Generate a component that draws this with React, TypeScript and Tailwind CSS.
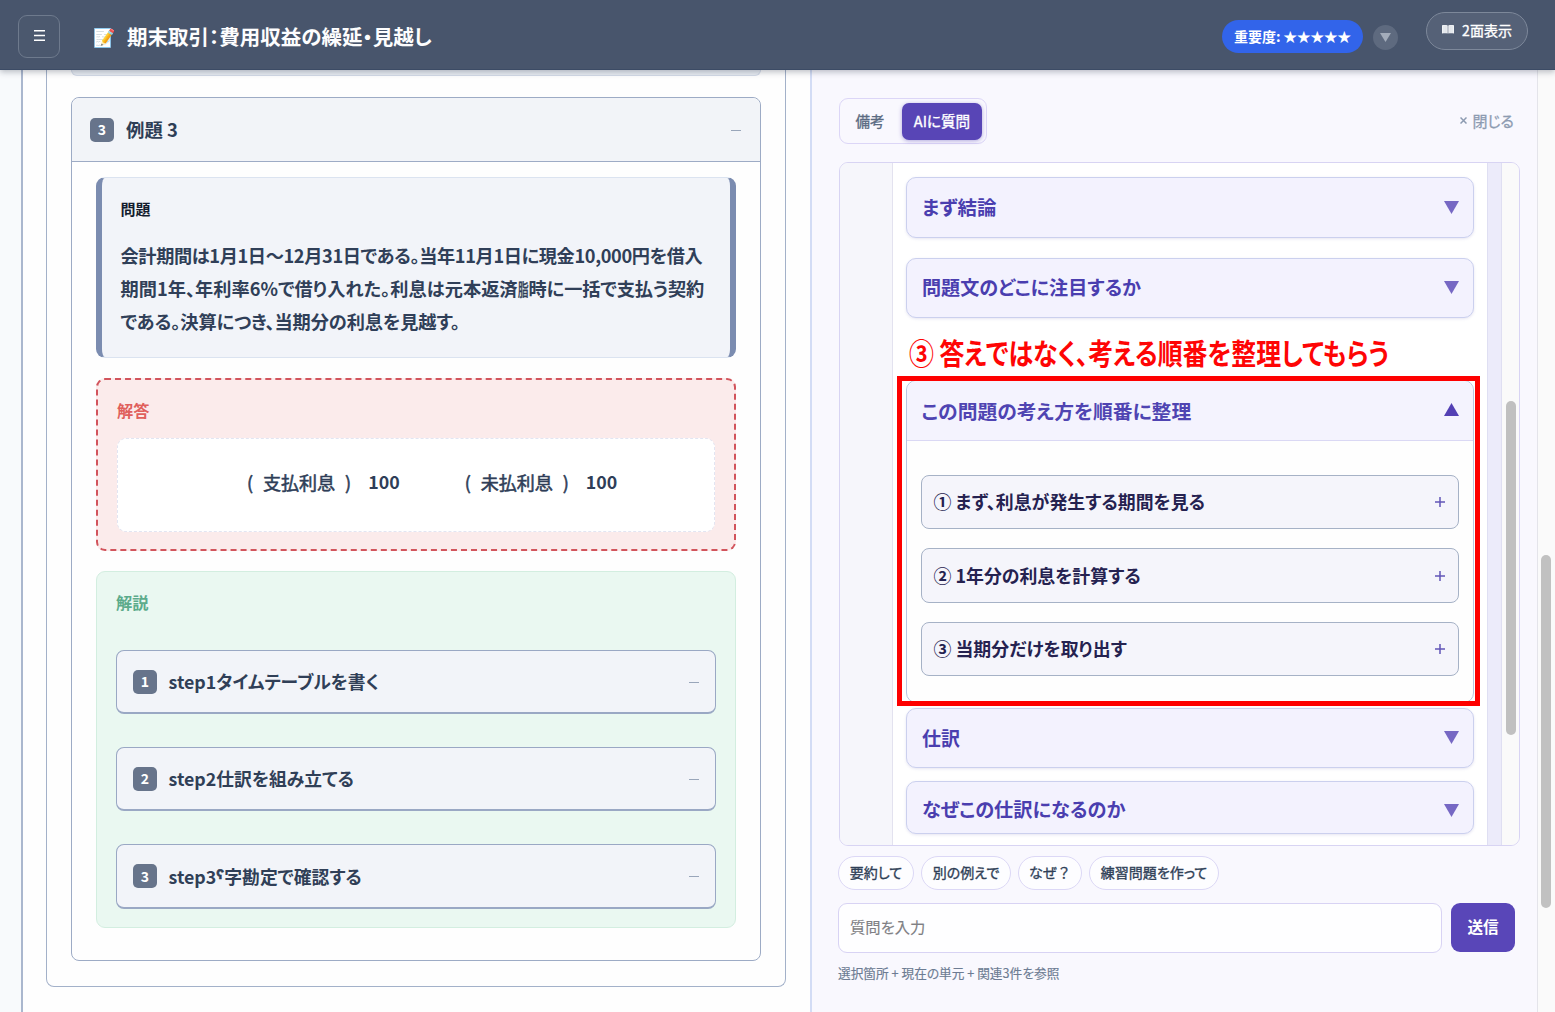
import React from "react";

function Triangle({ up = false }: { up?: boolean }) {
  return (
    <svg width="15" height="13" viewBox="0 0 15 13" className={up ? "mb-[3px] fill-[#5340b4]" : "fill-[#7668c4]"}>
      <path d={up ? "M7.5 0 15 13H0z" : "M0 0h15L7.5 13z"} />
    </svg>
  );
}

function BookIcon() {
  return (
    <svg width="12" height="9" viewBox="0 0 12 9" fill="none" className="mb-px">
      <path d="M0 .3C2 0 4.300 0 5.700.5V8.600C4.300 8.200 2 8.200 0 8.500z" fill="#f1f3f6" />
      <path d="M6.300.5C7.700 0 10 0 12 .3V8.500C10 8.200 7.700 8.200 6.300 8.600z" fill="#f1f3f6" />
      <path d="M2 .6v7.300M3.900.6v7.300M8.100.6v7.300M10 .6v7.300" stroke="#c3c9d2" strokeWidth=".5" />
    </svg>
  );
}

function Num({ n }: { n: string }) {
  return (
    <span className="flex size-6 items-center justify-center rounded-[5px] bg-[#67748b] pb-px text-[14px] leading-none font-bold text-white">
      {n}
    </span>
  );
}

function Step({ n, className, children }: { n: string; className: string; children: React.ReactNode }) {
  return (
    <div
      className={`flex items-center rounded-lg border border-b-2 border-[#9aa8c4] bg-[#f2f4f9] pr-4 pl-4 ${className}`}
    >
      <Num n={n} />
      <span className="ml-[11.500px] flex-1 text-[17.8px] font-bold whitespace-nowrap text-[#303f57]">{children}</span>
      <span className="mt-px h-px w-[10px] bg-[#99a6ba]" />
    </div>
  );
}

function Section({ className, text, children }: { className: string; text: string; children: React.ReactNode }) {
  return (
    <div
      className={`flex items-center justify-between rounded-[10px] border border-[#cbd0ee] bg-[#f3f2fe] pr-[14px] pl-[15px] shadow-[0_1px_3px_rgba(80,70,160,0.14)] ${className}`}
    >
      <span className={`font-bold whitespace-nowrap text-[#4a3eaf] ${text}`}>{children}</span>
      <Triangle />
    </div>
  );
}

function Thought({ className, children }: { className: string; children: React.ReactNode }) {
  return (
    <div
      className={`flex items-center justify-between rounded-lg border border-[#a6b2c6] bg-[#f5f5fb] pr-[13px] pl-[11.500px] ${className}`}
    >
      <span className="text-[17.9px] font-bold whitespace-nowrap text-[#252250]">{children}</span>
      <svg width="10" height="10" viewBox="0 0 10 10" className="stroke-[#6255b8]" strokeWidth="1.5">
        <path d="M5 0v10M0 5h10" />
      </svg>
    </div>
  );
}

function Chip({ className, children }: { className: string; children: React.ReactNode }) {
  return (
    <span
      className={`flex h-[34px] items-center justify-center rounded-full border border-[#dcd8f6] bg-[#fdfdff] pb-[2px] text-[14px] whitespace-nowrap text-[#2f3f57] [-webkit-text-stroke:0.35px] ${className}`}
    >
      {children}
    </span>
  );
}

function JournalAccount({ className, name, amount }: { className: string; name: string; amount: string }) {
  return (
    <span className={`flex items-center ${className}`}>
      <span className="flex gap-[10px] font-normal [-webkit-text-stroke:0.55px]">
        <span>(</span>
        <span>{name}</span>
        <span>)</span>
      </span>
      <span className="ml-[17px] text-[17.800px]">{amount}</span>
    </span>
  );
}

export default function App() {
  return (
    <div className="flex h-[1012px] w-[1555px] flex-col overflow-hidden bg-white leading-none [font-family:'Noto_Sans_CJK_JP',sans-serif] [font-feature-settings:'palt']">
      <header className="z-10 flex h-[70px] shrink-0 items-start border-b border-[#3c4b65] bg-[#48556c] shadow-[0_2px_6px_rgba(30,41,59,0.3)]">
        <div className="mt-[15px] ml-[18px] flex h-[43px] w-[42px] items-center justify-center rounded-[9px] border border-[#6e7a8d] bg-[#4b586e] pb-[2px]">
          <svg width="11" height="11" viewBox="0 0 11 11" stroke="#fff" strokeWidth="1.400">
            <path d="M0 .8h11M0 5.500h11M0 10.200h11" />
          </svg>
        </div>
        <div className="ml-[33px] flex h-[72px] items-center">
          <span className="w-[34px] text-[18px]">📝</span>
          <span className="text-[20.5px] font-bold whitespace-nowrap text-[#fdfdfe]">期末取引：費用収益の繰延・見越し</span>
        </div>
        <div className="ml-auto flex pr-[27px]">
          <div className="mt-5 flex h-[33px] w-[141px] items-center justify-center gap-[3px] rounded-full bg-[#3264ea] text-[14px] font-bold whitespace-nowrap text-white">
            <span className="pb-px">重要度:</span>
            <span className="text-[13.5px]">★★★★★</span>
          </div>
          <div className="mt-[25px] ml-[10px] flex size-[25px] items-center justify-center rounded-full bg-[#5e6a7f]">
            <svg width="11" height="9" viewBox="0 0 11 9" className="fill-[#a3acba]">
              <path d="M0 0h11L5.500 9z" />
            </svg>
          </div>
          <div className="mt-3 ml-[28px] flex h-[38px] w-[102px] items-center justify-center gap-2 rounded-full border border-[#7d889a] bg-[#556177] pb-[2px] text-[14px] whitespace-nowrap text-white">
            <BookIcon />
            <span className="[-webkit-text-stroke:0.35px]">2面表示</span>
          </div>
        </div>
      </header>

      <div className="flex min-h-0 flex-1">
        <main className="flex w-[810px] shrink-0 bg-[#f8fafc]">
          <div className="ml-[21px] flex-1 border-l-2 border-[#aab7ce] bg-[#fefefe] pl-[23px]">
            <div className="h-[917px] w-[740px] rounded-b-lg border border-t-0 border-[#a3b1c9] px-6">
              <div className="h-[6px] rounded-b-lg border border-t-0 border-[#d4dbe8] bg-[#e9edf3]" />
              <article className="mt-[21px] h-[864px] rounded-lg border border-[#9dabc5]">
                <div className="flex h-[64px] items-center rounded-t-lg border-b border-[#9dabc5] bg-[#f2f4f8] pr-[19px] pl-[18px]">
                  <Num n="3" />
                  <h2 className="ml-3 flex-1 pb-px text-[18.400px] font-bold text-[#2f3e56]">例題 3</h2>
                  <span className="mt-px h-px w-[10px] bg-[#99a6ba]" />
                </div>

                <div className="mx-6">
                  <section className="mt-[15px] h-[181px] rounded-[9px] border-x-[6px] border-y border-x-[#7b8cb0] border-y-[#dbe3f0] bg-[#f2f4f9] pl-[18.500px]">
                    <h3 className="pt-[23px] text-[15px] leading-[16px] font-bold text-[#131c2e]">問題</h3>
                    <div className="mt-[22px] text-[18.2px] leading-[33px] font-bold whitespace-nowrap text-[#303f58]">
                      <p className="tracking-[-0.37px]">会計期間は1月1日〜12月31日である。当年11月1日に現金10,000円を借入</p>
                      <p className="flex">
                        <span className="tracking-[0.04px]">期間1年、年利率6%で借り入れた。利息は元本返済</span>
                        <span className="w-[11px]">
                          <span className="inline-block origin-left scale-x-[0.58] scale-y-[0.95] font-normal [-webkit-text-stroke:0.6px]">
                            脂
                          </span>
                        </span>
                        <span className="tracking-[-0.1px]">時に一括で支払う契約</span>
                      </p>
                      <p className="tracking-[-0.08px]">である。決算につき、当期分の利息を見越す。</p>
                    </div>
                  </section>

                  <section className="mt-[20px] h-[173px] rounded-[9px] border-2 border-dashed border-[#d2545c] bg-[#fbebeb] px-[19px]">
                    <h3 className="flex h-[58px] items-center pt-[2px] text-[16.200px] font-bold text-[#e05f5c]">解答</h3>
                    <div className="flex h-[94px] items-center rounded-[9px] border border-dashed border-[#e2e5f2] bg-white pb-[6px] text-[18px] font-bold whitespace-nowrap text-[#2f3e58]">
                      <JournalAccount className="ml-[129px]" name="支払利息" amount="100" />
                      <JournalAccount className="ml-[65px]" name="未払利息" amount="100" />
                    </div>
                  </section>

                  <section className="mt-[20px] h-[357px] rounded-[9px] border border-[#d3eee0] bg-[#eaf8f1] px-[19px]">
                    <h3 className="flex h-[62px] items-center pb-[2px] text-[16.200px] font-bold text-[#5cab8b]">解説</h3>
                    <Step n="1" className="mt-4 h-[64px]">
                      step1タイムテーブルを書く
                    </Step>
                    <Step n="2" className="mt-[33px] h-[64px]">
                      step2仕訳を組み立てる
                    </Step>
                    <Step n="3" className="mt-[33px] h-[65px]">
                      step3
                      <span className="inline-block h-4 w-[8px] text-[21px] leading-[16px] [-webkit-text-stroke:0.6px]">
                        ˁ
                      </span>
                      字勘定で確認する
                    </Step>
                  </section>
                </div>
              </article>
            </div>
          </div>
        </main>

        <aside className="w-[727px] shrink-0 border-l-2 border-[#d3dcf5] bg-[#f9f8fe] pl-[26.500px]">
          <div className="mt-7 flex items-center justify-between pr-[23px]">
            <div className="flex h-[46px] w-[148.500px] items-center rounded-[9px] border border-[#dcd6f7] bg-[#f9f8fe] pr-[4px] pl-4">
              <span className="text-[14.5px] text-[#5b6b82] [-webkit-text-stroke:0.35px]">備考</span>
              <span className="ml-auto flex h-[37px] w-[80px] items-center justify-center rounded-[7px] bg-[#5845b6] text-[14.600px] whitespace-nowrap text-white shadow-[0_1px_4px_rgba(88,69,182,0.45)] [-webkit-text-stroke:0.35px]">
                AIに質問
              </span>
            </div>
            <span className="flex items-center gap-[5px] pb-px text-[15px] whitespace-nowrap text-[#8d9bb1] [-webkit-text-stroke:0.3px]">
              <svg width="7" height="7" viewBox="0 0 7 7" stroke="currentColor" strokeWidth="1.500">
                <path d="M.5.5l6 6M6.500.5l-6 6" />
              </svg>
              閉じる
            </span>
          </div>

          <div className="mt-[18px] flex h-[684px] w-[681px] overflow-hidden rounded-[9px] border border-[#d8d4f3]">
            <div className="w-[53.500px] border-r border-[#e3e2ef] bg-[#f6f6fb]" />
            <div className="w-[594px] bg-white px-[13px]">
              <Section className="mt-[14px] h-[60.500px]" text="pb-px text-[19.500px]">
                まず結論
              </Section>
              <Section className="mt-[20px] h-[60.500px]" text="text-[19.100px]">
                問題文のどこに注目するか
              </Section>
              <div className="flex h-[62px] items-center pt-[6px] pl-[3px]">
                <span className="origin-left scale-x-[0.858] text-[29px] font-bold whitespace-nowrap text-[#fe0505]">
                  ③ 答えではなく、考える順番を整理してもらう
                </span>
              </div>
              <div className="relative h-[323px] rounded-[10px] border border-[#b9c6e0] bg-[#fefefe]">
                <div className="flex h-[60px] items-center justify-between rounded-t-[10px] border-b border-[#dad8f4] bg-[#f4f3fe] pr-[14px] pl-[14.500px]">
                  <span className="text-[19.800px] font-bold whitespace-nowrap text-[#4f44b2]">
                    この問題の考え方を順番に整理
                  </span>
                  <Triangle up />
                </div>
                <div className="px-[14px] pt-[34px]">
                  <Thought className="h-[54px]">① まず、利息が発生する期間を見る</Thought>
                  <Thought className="mt-[19px] h-[55px]">② 1年分の利息を計算する</Thought>
                  <Thought className="mt-[19px] h-[54px]">③ 当期分だけを取り出す</Thought>
                </div>
                <div className="absolute -top-[5px] -right-[7px] -left-[10px] h-[330px] border-[5px] border-[#fe0000]" />
              </div>
              <Section className="mt-[5px] h-[60px] pb-px" text="pb-px text-[19px]">
                仕訳
              </Section>
              <Section className="mt-[13px] h-[53px] pt-[5px]" text="text-[19.200px]">
                なぜこの仕訳になるのか
              </Section>
            </div>
            <div className="w-[15px] border-x border-[#dfdff2] bg-[#ecebfa]" />
            <div className="flex-1 bg-[#fafafa] pt-[238px] pl-[4px]">
              <div className="h-[334px] w-[10px] rounded-full bg-[#c0c0c0]" />
            </div>
          </div>

          <div className="mt-[10px] -ml-[0.500px] flex gap-[7px]">
            <Chip className="w-[76px]">要約して</Chip>
            <Chip className="w-[90px]">別の例えで</Chip>
            <Chip className="w-[64px] [font-feature-settings:normal]">なぜ？</Chip>
            <Chip className="w-[130px]">練習問題を作って</Chip>
          </div>

          <div className="mt-[13px] -ml-[0.500px] flex gap-[9px]">
            <div className="flex h-[50px] w-[604px] items-center rounded-[9px] border border-[#d8d3f4] bg-[#fefeff] pb-[2px] pl-[11px] text-[15.300px] text-[#7f7f84] [-webkit-text-stroke:0.15px]">
              質問を入力
            </div>
            <div className="flex h-[49px] w-[64px] items-center justify-center rounded-[9px] bg-[#5946b8] pb-px text-[15.600px] font-bold text-white">
              送信
            </div>
          </div>
          <p className="mt-[14px] -ml-[0.500px] text-[12.700px] whitespace-nowrap text-[#6d7c93] [-webkit-text-stroke:0.15px]">
            選択箇所 + 現在の単元 + 関連3件を参照
          </p>
        </aside>

        <div className="w-[18px] border-l border-[#e4e4ea] bg-[#fafafa] pt-[485px] pl-[3px]">
          <div className="h-[353px] w-[10px] rounded-full bg-[#c1c1c1]" />
        </div>
      </div>
    </div>
  );
}
